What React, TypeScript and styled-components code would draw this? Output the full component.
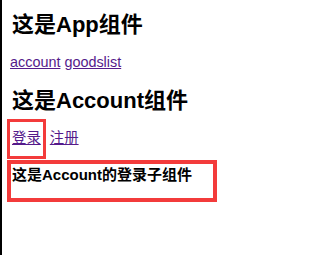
import React from "react";
import styled, { createGlobalStyle } from "styled-components";

const Global = createGlobalStyle`
  html, body { margin: 0; padding: 0; background: #fff; }
  body { font-family: "Liberation Sans", "Noto Sans CJK SC", sans-serif; color: #000; }
`;

const Page = styled.div`
  min-height: 100vh;
  box-sizing: border-box;
  border-left: 2px solid #000;
  padding: 11.6px 8px 0 8px;
  display: flex;
  flex-direction: column;
  align-items: flex-start;
`;

const Title = styled.h2<{ $top?: number }>`
  margin: ${(p) => p.$top ?? 0}px 0 0 2px;
  font-size: 22px;
  line-height: 26px;
  font-weight: bold;
  font-family: "Liberation Sans", "Noto Sans CJK SC", sans-serif;
`;

const Nav = styled.nav<{ $top?: number }>`
  margin-top: ${(p) => p.$top ?? 0}px;
  font-size: 14.4px;
  line-height: 17px;
  display: flex;
  align-items: center;
  gap: 4px;
`;

const Link = styled.a<{ $active?: boolean }>`
  color: #551a8b;
  text-decoration: underline;
  cursor: pointer;
  display: inline-block;
  ${(p) =>
    p.$active
      ? `border: 3px solid #f33b3b; padding: 8px 2px 9px 2px; margin-left: -3px;`
      : ``}
`;

const SubBox = styled.div`
  margin: 1px 0 0 -3px;
  width: 210px;
  box-sizing: border-box;
  border: 4px solid #f33b3b;
  padding: 2.4px 2px 13.6px 1px;
`;

const SubTitle = styled.h4`
  margin: 0;
  font-size: 15px;
  line-height: 18px;
  font-weight: bold;
`;

export default function App() {
  return (
    <>
      <Global />
      <Page>
        <Title>这是App组件</Title>
        <Nav $top={16.4}>
          <Link>account</Link>
          <Link>goodslist</Link>
        </Nav>
        <Title $top={16.6}>这是Account组件</Title>
        <Nav $top={5.4}>
          <Link $active>登录</Link>
          <Link>注册</Link>
        </Nav>
        <SubBox>
          <SubTitle>这是Account的登录子组件</SubTitle>
        </SubBox>
      </Page>
    </>
  );
}
